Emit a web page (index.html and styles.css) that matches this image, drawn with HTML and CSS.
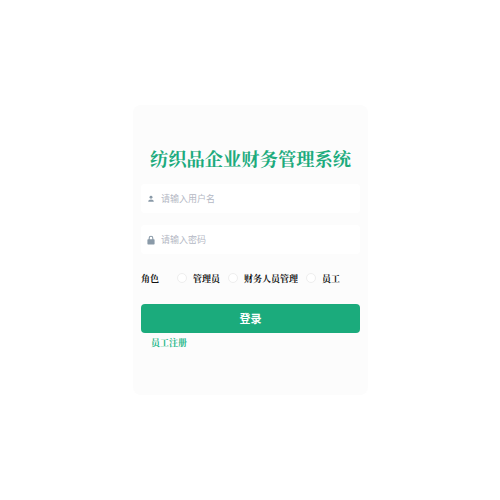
FILE: index.html
```html
<!DOCTYPE html>
<html lang="zh-CN">
<head>
    <meta charset="UTF-8">
    <meta name="viewport" content="width=device-width, initial-scale=1.0">
    <title>纺织品企业财务管理系统</title>
    <link rel="stylesheet" href="styles.css">
</head>
<body>
    <div class="login-card">
        <h1 class="login-title">纺织品企业财务管理系统</h1>

        <div class="input-box">
            <svg class="input-icon" viewBox="0 0 12 12">
                <circle cx="6" cy="3.4" r="2.2"/>
                <path d="M1.8 10.2c0-2.4 1.8-3.6 4.2-3.6s4.200 1.200 4.200 3.600z"/>
            </svg>
            <input type="text" placeholder="请输入用户名">
        </div>

        <div class="input-box">
            <svg class="input-icon icon-lock" viewBox="0 0 12 12">
                <path d="M3.200 5V3.600a2.800 2.800 0 0 1 5.600 0V5h.7a.8.8 0 0 1 .8.800v4.700a.8.8 0 0 1-.8.800h-7a.8.8 0 0 1-.8-.8V5.800a.8.8 0 0 1 .8-.8zm1.300 0h3V3.600a1.500 1.500 0 0 0-3 0z"/>
            </svg>
            <input type="password" placeholder="请输入密码">
        </div>

        <div class="role-row">
            <span class="role-label">角色</span>
            <label class="role-item"><span class="radio"></span>管理员</label>
            <label class="role-item"><span class="radio"></span>财务人员管理</label>
            <label class="role-item"><span class="radio"></span>员工</label>
        </div>

        <button class="login-btn">登录</button>
        <a class="register-link" href="#">员工注册</a>
    </div>
</body>
</html>
```

FILE: styles.css
```css
body, html {
    margin: 0;
    padding: 0;
    height: 500px;
    background: white;
    font-family: "Liberation Serif", "Noto Serif CJK SC", "Noto Sans CJK SC", serif;
}

body {
    display: flex;
    align-items: flex-start;
    justify-content: center;
}

.login-card {
    box-sizing: border-box;
    width: 235px;
    height: 290px;
    margin-top: 105px;
    margin-left: 1px;
    padding: 43px 8px 0;
    background: #fcfcfc;
    border-radius: 8px;
}

.login-title {
    margin: 0 0 11px;
    font-size: 18.3px;
    line-height: 25px;
    font-weight: bold;
    text-align: center;
    white-space: nowrap;
    color: #1dab7d;
}

.input-box {
    display: flex;
    align-items: center;
    height: 29px;
    margin-bottom: 12px;
    padding-left: 6px;
    background: white;
    border-radius: 4px;
}

.input-icon {
    width: 8px;
    height: 8px;
    fill: #8a9aa8;
    flex-shrink: 0;
}

.icon-lock {
    width: 10px;
    height: 10px;
    margin-left: -1px;
    margin-right: -1px;
}

.input-box input {
    flex: 1;
    min-width: 0;
    margin-left: 6px;
    padding: 0;
    border: none;
    outline: none;
    background: transparent;
    font-family: "Noto Sans CJK SC", sans-serif;
    font-size: 9px;
}

.input-box input::placeholder {
    color: #b4b8c4;
}

.role-row {
    display: flex;
    align-items: center;
    height: 16px;
    margin-top: 16px;
    font-size: 9px;
    font-weight: bold;
    white-space: nowrap;
    color: #111;
}

.role-label {
    width: 36px;
}

.role-item {
    display: flex;
    align-items: center;
    margin-right: 8px;
}

.radio {
    box-sizing: border-box;
    width: 10px;
    height: 10px;
    margin-right: 6px;
    background: white;
    border: 1px solid #eeeeee;
    border-radius: 50%;
}

.login-btn {
    display: block;
    width: 100%;
    height: 29px;
    margin-top: 18px;
    padding: 0 0 2px;
    border: none;
    border-radius: 4px;
    background: #1bab7c;
    color: white;
    font-family: "Noto Sans CJK SC", sans-serif;
    font-size: 11px;
    font-weight: bold;
}

.register-link {
    display: block;
    margin: 3px 0 0 10px;
    font-size: 9px;
    font-weight: bold;
    text-decoration: none;
    color: #22b586;
}
```
